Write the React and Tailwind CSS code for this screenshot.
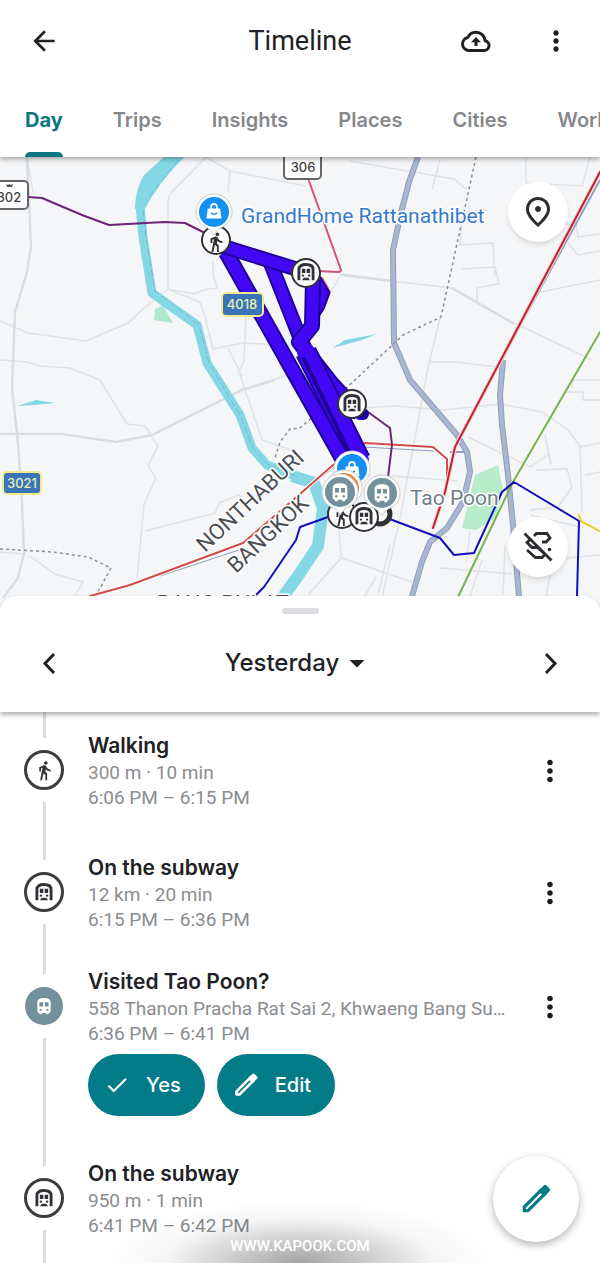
import React, { useState } from "react";
import {
  MdArrowBack,
  MdArrowDropDown,
  MdCheck,
  MdDirectionsWalk,
  MdMoreVert,
  MdOutlinePlace,
} from "react-icons/md";

const tabs = ["Day", "Trips", "Insights", "Places", "Cities", "World"];

const timeline = [
  {
    id: 1,
    kind: "walk",
    title: "Walking",
    detail: "300 m · 10 min",
    time: "6:06 PM – 6:15 PM",
    spacing: "pb-6",
  },
  {
    id: 2,
    kind: "subway",
    title: "On the subway",
    detail: "12 km · 20 min",
    time: "6:15 PM – 6:36 PM",
    spacing: "pb-4",
  },
  {
    id: 3,
    kind: "visit",
    title: "Visited Tao Poon?",
    detail: "558 Thanon Pracha Rat Sai 2, Khwaeng Bang Sue, Bangkok",
    time: "6:36 PM – 6:41 PM",
    spacing: "pb-6",
    confirm: true,
  },
  {
    id: 4,
    kind: "subway",
    title: "On the subway",
    detail: "950 m · 1 min",
    time: "6:41 PM – 6:42 PM",
    spacing: "pb-4",
    last: true,
  },
];

const CloudUpIcon = () => (
  <svg width="32" height="32" viewBox="0 0 32 32" fill="none" aria-hidden="true">
    <path
      d="M8.200 25.500h16.300a4.900 4.900 0 0 0 .6-9.700C24.600 11 20.800 7.200 16 7.200c-3.700 0-6.800 2.100-8.200 5.300a6.600 6.600 0 0 0 .4 13z"
      stroke="currentColor"
      strokeWidth="3"
      strokeLinejoin="round"
    />
    <path d="M16 12l5 5.300h-3.500v3.700h-3v-3.700H11z" fill="currentColor" />
  </svg>
);

const PencilIcon = ({ size }) => (
  <svg width={size} height={size} viewBox="0 0 30 30" fill="none" aria-hidden="true">
    <path
      d="M4 26v-3.500L20.500 6l3.500 3.500L7.500 26z"
      stroke="currentColor"
      strokeWidth="3"
      strokeLinejoin="round"
    />
    <path
      d="M17 7.500l5-5a2 2 0 0 1 3 0l2.500 2.500a2 2 0 0 1 0 3l-5 5z"
      fill="currentColor"
    />
  </svg>
);

const SubwayIcon = (props) => (
  <svg viewBox="0 0 24 24" fill="none" {...props}>
    <path
      d="M3.500 22V9C3.500 4.500 6.500 3 12 3s8.500 1.500 8.500 6v13"
      stroke="#303236"
      strokeWidth="3.400"
    />
    <path d="M7 8h4.200v5.200H7zM12.800 8H17v5.200h-4.200z" fill="#303236" />
    <circle cx="8.300" cy="16.300" r="1.400" fill="#303236" />
    <circle cx="15.700" cy="16.300" r="1.400" fill="#303236" />
    <path d="M7 22l2.400-3h5.200l2.400 3z" fill="#303236" />
  </svg>
);

const TrainIcon = (props) => (
  <svg viewBox="0 0 24 24" {...props}>
    <path
      d="M4 8c0-4 3-5.500 8-5.500S20 4 20 8v10c0 1.500-1 2.500-2.500 2.500V22h-3v-1.500h-5V22h-3v-1.500C5 20.500 4 19.500 4 18z"
      fill="#fff"
    />
    <path d="M6.500 7.500h4.500v5H6.500zM13 7.500h4.500v5H13z" fill="#74909c" />
    <circle cx="7.900" cy="16.700" r="1.300" fill="#74909c" />
    <circle cx="16.100" cy="16.700" r="1.300" fill="#74909c" />
  </svg>
);

const BagIcon = (props) => (
  <svg viewBox="0 0 24 24" fill="none" {...props}>
    <path d="M4.500 9h15l1.500 12H3z" fill="#fff" />
    <path d="M8.500 10V7.500C8.500 2 15.500 2 15.500 7.500V10" stroke="#fff" strokeWidth="2" />
    <path d="M8.500 14c1.500 2.800 5.500 2.800 7 0" stroke="#1290f3" strokeWidth="1.600" />
  </svg>
);

const RouteOffIcon = () => (
  <svg width="32" height="32" viewBox="0 0 32 32" fill="none" aria-hidden="true">
    <g stroke="#2b2d30" strokeWidth="2.800">
      <path d="M2.500 2.500l27 27" />
      <path d="M12 5l2.500-2.500H25l3 4.500-4 4h-4" />
      <path d="M8 8.500L5 11.500l5 5h6l5.500 5.500" />
      <path d="M5 19l8.500 7.500H20l3-3" />
    </g>
    <circle cx="27.500" cy="18.500" r="1.800" fill="#2b2d30" />
  </svg>
);

const Pin = ({ x, y, color, children }) => (
  <g>
    <path
      d={`M${x - 18} ${y}a18 18 0 1 1 36 0c0 9-6 14-12 16q-3 2-6 7q-3-5-6-7c-6-2-12-7-12-16z`}
      fill="#fff"
      stroke="#c9cccf"
      strokeWidth="1"
    />
    <circle cx={x} cy={y} r="15" fill={color} />
    {children}
  </g>
);

const Stop = ({ x, y, walk }) => (
  <g>
    <circle cx={x} cy={y} r="14" fill="#fff" stroke="#303236" strokeWidth="2" />
    {walk ? (
      <MdDirectionsWalk x={x - 11} y={y - 9} size={22} color="#303236" />
    ) : (
      <SubwayIcon x={x - 10} y={y - 11} width="20" height="20" />
    )}
  </g>
);

const Trip = ({ d, width }) => (
  <g fill="none" strokeLinejoin="round">
    <path d={d} stroke="#20009a" strokeWidth={width} />
    <path d={d} stroke="#4208f5" strokeWidth={width - 4} strokeLinecap="round" />
  </g>
);

const RouteMap = () => (
  <svg
    className="block h-full w-full bg-[#f5f6f7]"
    viewBox="0 157 600 451"
    preserveAspectRatio="xMidYMin slice"
    role="img"
    aria-label="Map of yesterday's trips"
  >
    {/* minor roads */}
    <g fill="none" stroke="#dfe3e8" strokeWidth="1.500">
      <path d="M27 157l6 35M168 290v-88l2-8 36-37 24 14 76 15M230 171l-2 20M213 262v12l4 14-14 2-8 4-27-5-25 20-15 14-42 18-58-8-28-12M170 290l30 12 5 15 8 32 30-6 57 3M246 315l-2 45-6 15M228 348l14 28" />
      <path d="M0 360l28 2 12 4 30 2 30 12 27 44 18 2 13 20-10 20 8 12-12 26-7 75M145 531l70-18 4-10 20-8 8 8M240 375l22 65 40 14M262 385l38-16 14-4" />
      <path d="M340 274l60 8 52 6 60 34 80 38M341 274l-10 18M440 318l-12 50-28 150-18 80M349 161l105 18 12 10M495 276l-2-33-33 2 3-33 25-2M462 269l33-2 4 17-22 4v14M526 157v26l56 3 8-29M540 292l60-12M575 215l3 22 22-3M568 243l10 12 22-4" />
      <path d="M430 362h25l52 6M320 430l44-22 30-2 50 4 56-6 42 8 26 18 12 16 2 66M468 437l62 30 18-12M563 392h20v8h17M572 388v-8h28M580 447l20-4M585 475l15-3M536 470l31-1 5 18-14 20-28 3M545 435l6 30M530 515l50 12M470 531l-4 32M482 560l-12 36M505 545l-2 50M390 545l-12 50M342 558l70 24M341 557l-5-70M342 557l-34 38M376 577l-12 20M440 568l74 6M545 560l55-5M550 575l-4 22" />
      <path d="M30 556l25 18 28 8-8 14M0 552l24 2M440 160l-8 30M560 220l14 8M380 475l78 6M350 470l-14-10M395 490l-8 30" />
    </g>
    <g fill="none" stroke="#d9dee4" strokeWidth="2.500">
      <path d="M27 157l4 90-4 25-12 40-3 75 6 56 4 60 2 50-6 25-15 20" />
      <path d="M0 434h62l54 8 36-7 90-45 32-10M342 275l50 6M452 288l62 36" />
    </g>

    {/* water and parks */}
    <g fill="#84d8e6">
      <path d="M164 157h21c-14 12-32 36-40 52h-10c0-12 3-24 9-34z" />
      <path d="M333 348l12-8 32-6-15 6z" />
      <path d="M17 406l19-6 19 3-20 2z" />
    </g>
    <path d="M155 309l8-4 10 18-19-3z" fill="#abe8cd" />
    <path d="M475 475l23-10 5 25-7 28-20 12-14-2z" fill="#b8ecc8" />
    <g fill="none" stroke="#84d8e6" strokeLinejoin="round">
      <path d="M140 205l3 32 9 56 45 32 10 38 33 52 12 33 15 17 33 13" strokeWidth="9" />
      <path d="M292 476l22 7 9 25-5 38-20 30-18 25" strokeWidth="12" />
      <path
        d="M143 210l3 27 9 54 44 34 10 38 31 52 13 33 14 16 33 14M178 160l-32 40"
        stroke="#77b8cf"
        strokeWidth="1"
        strokeDasharray="7 3"
      />
    </g>

    {/* expressways */}
    <g fill="none" stroke="#8f9fc0" strokeLinejoin="round">
      <path d="M418 157l-9 25-9 35-7 33 1 93 16 37 47 55 10 17 3 20-7 30-16 26-17 14-8 20-10 34" strokeWidth="6" />
      <path d="M503 360l-3 35 2 30 6 50 5 50 6 72" strokeWidth="6" />
      <path d="M600 180l-78 142-20 38M470 452h-20" strokeWidth="2" />
      <path d="M160 576l82-27M300 495l34-28 30-20 70 4" strokeWidth="1" />
    </g>
    <g fill="none" stroke="#a8b6d0" strokeLinejoin="round" strokeWidth="4">
      <path d="M418 157l-9 25-9 35-7 33 1 93 16 37 47 55 10 17 3 20-7 30-16 26-17 14-8 20-10 34" />
      <path d="M503 360l-3 35 2 30 6 50 5 50 6 72" />
    </g>

    {/* province borders */}
    <g fill="none" stroke="#8c9094" strokeWidth="1.500" strokeDasharray="3 3">
      <path d="M476 157l-35 160-38 18-48 45-55 48-10 1-10 13-5 16" />
      <path d="M0 549l53 3 35 5 23 11-13 24" />
    </g>

    {/* rail lines */}
    <g fill="none" strokeLinejoin="round" strokeLinecap="round">
      <path d="M600 332l-87 150-55 115" stroke="#74b54c" strokeWidth="2" />
      <path d="M90 596l40-11 113-42 57-49 33-29 32-22 68 4 14 12v26" stroke="#fff" strokeWidth="4" />
      <path d="M90 596l40-11 113-42 57-49 33-29 32-22 68 4 14 12v26" stroke="#d34b48" strokeWidth="2" />
      <path d="M600 172L455 447l-10 45-12 36" stroke="#f3d7d8" strokeWidth="4" />
      <path d="M600 172L455 447l-10 45-12 36" stroke="#c42030" strokeWidth="2" />
      <path d="M28 197l14 1 40 17 27 10 56-3 20 1 24 12M368 412l22 16 2 17-4 32" stroke="#6d2379" strokeWidth="2" />
      <path d="M309 181l32 89q0 2-3 2l-20-1M322 278l8 14-7 17" stroke="#d5527f" strokeWidth="2" />
      <path d="M387 518l53 20 14 17 20-2 28-61 12-10 65 39-2 75M328 517l-28 10-4 13-32 47-10 10" stroke="#1410b8" strokeWidth="2" />
      <path d="M579 515l2 6 20 11" stroke="#eccb31" strokeWidth="2" />
    </g>

    {/* recorded trips */}
    <Trip d="M316 278l9 15-5 14-8 12" width={10} />
    <Trip d="M270 262l30 76 58 120" width={15} />
    <Trip d="M313 280l-1 46-13 16 33 42 28 30" width={16} />
    <Trip d="M306 352l54 108" width={22} />
    <Trip d="M226 252l126 224" width={16} />
    <Trip d="M222 246l84 26" width={15} />
    <path d="M303 357l46 95" stroke="#20009a" strokeWidth="4" />
    <circle cx="363" cy="414" r="6" fill="#20009a" />

    {/* labels */}
    <g
      fontFamily="Roboto, sans-serif"
      stroke="#fff"
      strokeWidth="3"
      strokeLinejoin="round"
      style={{ paintOrder: "stroke" }}
    >
      <text x="241" y="223" fontSize="21" fill="#3579cd">
        GrandHome Rattanathibet
      </text>
      <text x="410" y="505" fontSize="21" fill="#6b7f8b">
        Tao Poon
      </text>
      <g fontSize="22" fill="#4b4e52">
        <text transform="translate(205 553) rotate(-43)">NONTHABURI</text>
        <text transform="translate(236 574) rotate(-43)">BANGKOK</text>
        <text x="157" y="611">
          BANG PHLAT
        </text>
      </g>
    </g>

    {/* road shields */}
    <g fontFamily="Inter, sans-serif" fontSize="13" fontWeight="500" textAnchor="middle">
      <g fill="#fff" stroke="#666" strokeWidth="2">
        <rect x="-9" y="181" width="37" height="28" rx="4" />
        <rect x="284" y="148" width="37" height="31" rx="4" />
      </g>
      <path d="M6 184l1 3h5l1-3-2 1-1.500-1-1.500 1z" fill="#555" />
      <text x="9" y="202" fill="#444">302</text>
      <text x="303" y="172" fill="#444">306</text>
      <g fill="#3b75b9" stroke="#f2e88d" strokeWidth="2">
        <rect x="222" y="293" width="41" height="23" rx="4" />
        <rect x="3" y="472" width="38" height="22" rx="4" />
      </g>
      <text x="242" y="309" fill="#e9f0b0">4018</text>
      <text x="22" y="488" fill="#e9f0b0">3021</text>
    </g>

    {/* stops and places */}
    <Stop x={216} y={240} walk />
    <Pin x={214} y={212} color="#1290f3">
      <BagIcon x={204} y={201} width="20" height="20" />
    </Pin>
    <Stop x={306} y={273} />
    <Stop x={352} y={404} />
    <Pin x={352} y={469} color="#1290f3">
      <BagIcon x={342} y={459} width="20" height="20" />
    </Pin>
    <Pin x={344} y={488} color="#ee8434" />
    <Stop x={342} y={514} walk />
    <circle cx="380" cy="514" r="10" fill="#fff" stroke="#303236" strokeWidth="5" />
    <Stop x={364} y={517} />
    <Pin x={340} y={492} color="#74909c">
      <TrainIcon x={329} y={481} width="22" height="22" />
    </Pin>
    <Pin x={382} y={493} color="#74909c">
      <TrainIcon x={371} y={482} width="22" height="22" />
    </Pin>
  </svg>
);

const Marker = ({ kind }) => {
  if (kind === "visit") {
    return (
      <span className="my-[13px] flex size-[38px] items-center justify-center rounded-full bg-[#74909c]">
        <TrainIcon width="20" height="20" />
      </span>
    );
  }
  return (
    <span className="my-3 flex size-10 items-center justify-center rounded-full border-[3px] border-[#3c3e42]">
      {kind === "walk" ? (
        <MdDirectionsWalk size={21} color="#303236" />
      ) : (
        <SubwayIcon width="20" height="20" />
      )}
    </span>
  );
};

const pill =
  "flex h-[62px] items-center gap-4 rounded-full bg-[#037b89] px-4 pr-6 font-['Inter',sans-serif] text-xl font-medium text-white";

const TimelineItem = ({ item }) => (
  <li className="flex last:grow">
    <div className="flex w-[88px] shrink-0 flex-col items-center">
      <span className="h-[26px] w-[3px] bg-[#dcdddf]" />
      <Marker kind={item.kind} />
      <span className="w-[3px] grow bg-[#dcdddf]" />
    </div>
    <div className={`min-w-0 grow pt-5 ${item.spacing}`}>
      <h3 className="font-['Inter',sans-serif] text-[21px] leading-7 font-semibold text-[#202124]">
        {item.title}
      </h3>
      <p className="truncate text-[19px] leading-[25px] text-[#8b8d90]">{item.detail}</p>
      <p className="text-[19px] leading-[25px] text-[#8b8d90]">{item.time}</p>
      {item.confirm && (
        <div className="mt-2 flex gap-3">
          <button type="button" className={pill}>
            <MdCheck size={26} />
            Yes
          </button>
          <button type="button" className={pill}>
            <PencilIcon size={26} />
            Edit
          </button>
        </div>
      )}
    </div>
    <div className="flex w-[88px] shrink-0 justify-center pt-[42px] pr-3">
      {!item.last && (
        <button type="button" aria-label={`Options for ${item.title}`} className="h-8">
          <MdMoreVert size={34} color="#1b1c1e" />
        </button>
      )}
    </div>
  </li>
);

const mapButton =
  "absolute right-8 flex size-[60px] items-center justify-center rounded-full bg-white shadow-md";

export default function App() {
  const [active, setActive] = useState("Day");

  return (
    <div className="relative flex min-h-screen flex-col overflow-hidden bg-white font-['Roboto',sans-serif] text-[#202124]">
      <header className="relative z-10 bg-white shadow-[0_2px_5px_rgba(0,0,0,0.35)]">
        <div className="grid h-[82px] grid-cols-3 items-center px-7">
          <button type="button" aria-label="Back" className="justify-self-start">
            <MdArrowBack size={32} />
          </button>
          <h1 className="text-center text-[27px] leading-8">Timeline</h1>
          <div className="flex items-center gap-12 justify-self-end">
            <button type="button" aria-label="Backup">
              <CloudUpIcon />
            </button>
            <button type="button" aria-label="More options">
              <MdMoreVert size={32} />
            </button>
          </div>
        </div>
        <nav className="flex h-[75px] gap-[50px] overflow-hidden px-[25px] font-['Inter',sans-serif]">
          {tabs.map((tab) => (
            <button
              key={tab}
              type="button"
              onClick={() => setActive(tab)}
              className={`flex shrink-0 flex-col items-center justify-between pt-6 text-xl leading-7 ${
                tab === active ? "font-bold text-[#0b7681]" : "font-semibold text-[#85878a]"
              }`}
            >
              {tab}
              {tab === active && <span className="h-[5px] w-full rounded-t-md bg-[#0b7681]" />}
            </button>
          ))}
        </nav>
      </header>

      <section className="relative h-[451px]">
        <RouteMap />
        <button type="button" aria-label="Places" className={`${mapButton} top-[25px]`}>
          <MdOutlinePlace size={36} color="#2b2d30" />
        </button>
        <button type="button" aria-label="Hide routes" className={`${mapButton} top-[360px]`}>
          <RouteOffIcon />
        </button>
      </section>

      <section className="relative -mt-3 flex grow flex-col rounded-t-2xl bg-white">
        <div className="relative flex h-[116px] flex-col items-center rounded-t-2xl shadow-[0_3px_5px_rgba(0,0,0,0.3)]">
          <span className="mt-3 h-[6px] w-[37px] rounded-full bg-[#dadce0]" />
          <div className="mt-7 flex w-full items-center justify-between px-[38px]">
            <button type="button" aria-label="Previous day">
              <svg width="24" height="42" viewBox="0 0 24 42" fill="none" aria-hidden="true">
                <path d="M16 12l-9 9.500 9 9.500" stroke="#202124" strokeWidth="3" />
              </svg>
            </button>
            <button
              type="button"
              className="flex items-center font-['Inter',sans-serif] text-2xl font-medium"
            >
              Yesterday
              <MdArrowDropDown size={36} />
            </button>
            <button type="button" aria-label="Next day">
              <svg width="24" height="42" viewBox="0 0 24 42" fill="none" aria-hidden="true">
                <path d="M8 12l9 9.500-9 9.500" stroke="#202124" strokeWidth="3" />
              </svg>
            </button>
          </div>
        </div>

        <ul className="flex grow flex-col">
          {timeline.map((item) => (
            <TimelineItem key={item.id} item={item} />
          ))}
        </ul>
      </section>

      <div className="pointer-events-none absolute inset-x-0 bottom-0 flex h-[70px] items-end justify-center bg-[radial-gradient(ellipse_32%_90%_at_50%_100%,rgba(0,0,0,0.36),rgba(0,0,0,0.2)_35%,rgba(0,0,0,0.04)_70%,transparent)] pb-[6px]">
        <span className="text-[15px] leading-[22px] font-medium text-white">WWW.KAPOOK.COM</span>
      </div>

      <button
        type="button"
        aria-label="Edit timeline"
        className="absolute right-[21px] bottom-[21px] flex size-[86px] items-center justify-center rounded-full bg-white text-[#037b89] shadow-[0_3px_9px_rgba(0,0,0,0.3)]"
      >
        <PencilIcon size={32} />
      </button>
    </div>
  );
}
